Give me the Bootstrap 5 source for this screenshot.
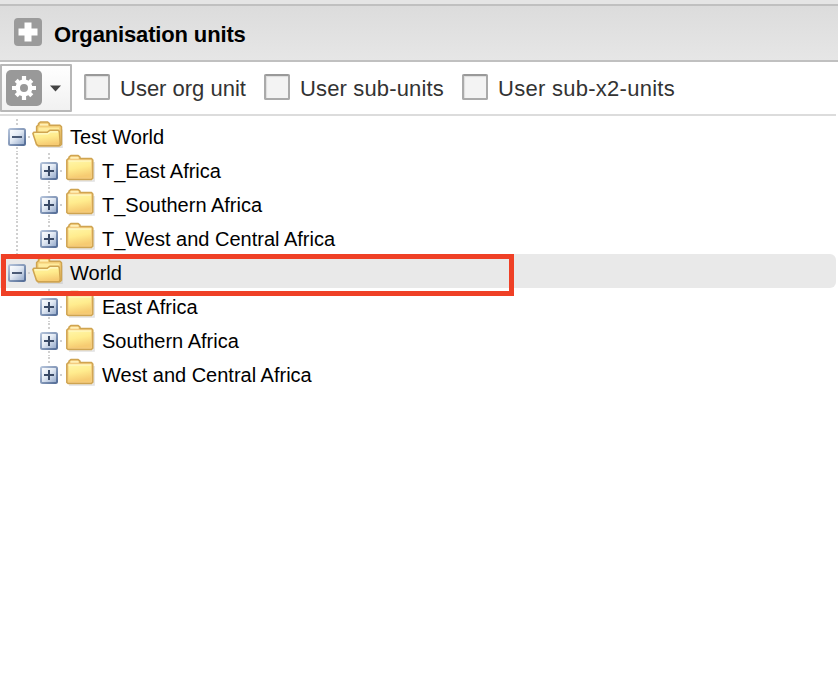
<!DOCTYPE html>
<html lang="en">
<head>
<meta charset="utf-8">
<meta name="viewport" content="width=device-width, initial-scale=1">
<title>Organisation units</title>
<link href="https://cdn.jsdelivr.net/npm/bootstrap@5.3.0/dist/css/bootstrap.min.css" rel="stylesheet">
<style>
body{font-family:"Liberation Sans",Arial,sans-serif;color:#000;background:#fff;height:682px;overflow:hidden}
.top-strip{height:4px;background:#e5e5e5}
.panel-head{height:58px;border-top:2px solid #c0c0c0;border-bottom:2px solid #c0c0c0;background:linear-gradient(#dcdcdc,#e6e6e6);padding-left:14px}
.panel-head h1{font-size:22px;line-height:26px;letter-spacing:-.15px;margin:3px 0 0 12px}
.panel-head svg{margin-bottom:2px}
.toolbar{height:54px;width:836px;border-bottom:2px solid #dcdcdc;color:#333;font-size:22px}
.gear-btn{width:72px;height:48px;margin-top:2px;border:2px solid #b8b8b8;border-radius:1px;background:linear-gradient(#fff,#f1f1f1);padding:0 0 0 4px}
.gear-btn .caret-down{margin-left:8px}
.check-group{width:180px}
.check-group.wide-label{width:198px}
.check-group.wide-label label{letter-spacing:.15px}
.check-group.widest-label{width:220px}
.check-group.widest-label label{letter-spacing:.27px}
.toolbar label{line-height:26px;margin-top:1px;white-space:nowrap}
.check-box{width:26px;height:26px;border:2px solid #aaa;border-top-color:#999;border-radius:2px;background:#f3f3f3;appearance:none;margin:-2px 10px 0 0;box-shadow:inset 1px 1px 1px #ddd}
.tree{padding-top:2px;width:836px}
.tree-row{height:34px;font-size:20px;line-height:24px}
.tree-row svg,.toolbar svg,.panel-head svg{flex:none;display:block}
.tree-row span{margin:4px 0 0 6px;white-space:nowrap}
.selected-row{background:#e9e9e9;border-radius:0 6px 6px 0}
.red-frame{left:1px;top:0;width:513px;height:42px;border:5px solid #ef4026;z-index:2}
</style>
</head>
<body>
<svg width="0" height="0" class="position-absolute">
<defs>
<linearGradient id="fold" x1="0" y1="0" x2=".25" y2="1"><stop offset="0" stop-color="#fff6a8"/><stop offset=".5" stop-color="#ffec8e"/><stop offset="1" stop-color="#f6cb72"/></linearGradient>
<linearGradient id="tog" x1="0" y1="0" x2="1" y2="1"><stop offset="0" stop-color="#fff"/><stop offset=".45" stop-color="#e3eaf4"/><stop offset="1" stop-color="#8fa5c8"/></linearGradient>
<linearGradient id="edge" x1="0" y1="0" x2="1" y2="1"><stop offset="0" stop-color="#b4c3da"/><stop offset="1" stop-color="#536c96"/></linearGradient>
<symbol id="minus" viewBox="0 0 32 34"><rect x="9" y="11" width="16" height="16" rx="1.5" fill="url(#tog)" stroke="url(#edge)" stroke-width="2"/><path d="M12 19h10" stroke="#4a5a76" stroke-width="2"/><path d="M28 19h2" stroke="#d0d0d0" stroke-width="2"/></symbol>
<symbol id="plus" viewBox="0 0 32 34"><rect x="9" y="11" width="16" height="16" rx="1.5" fill="url(#tog)" stroke="url(#edge)" stroke-width="2"/><path d="M12 19h10M17 14v10" stroke="#3a4a66" stroke-width="2"/><path d="M28 19h2" stroke="#d0d0d0" stroke-width="2"/></symbol>
<symbol id="up" viewBox="0 0 32 34"><path d="M17 1v8" stroke="#d0d0d0" stroke-width="2" stroke-dasharray="2 2"/></symbol>
<symbol id="down" viewBox="0 0 32 34"><path d="M17 29v5" stroke="#d0d0d0" stroke-width="2" stroke-dasharray="2 2"/></symbol>
<symbol id="line" viewBox="0 0 32 34"><path d="M17 1v33" stroke="#d0d0d0" stroke-width="2" stroke-dasharray="2 2"/></symbol>
<symbol id="closed" viewBox="0 0 32 34"><g transform="translate(0 -1)"><path d="M5 30h25V11" fill="none" stroke="#bbb" stroke-opacity=".45" stroke-width="1.6"/><path d="M2.8 27.5V9L5 7.2V6l1.8-1.4h7.4L16 6v1.6h11.5L28.8 9v18.3L27.3 28.6h-23z" fill="#f4cc80" stroke="#cfa450" stroke-width="1.5" stroke-linejoin="round"/><path d="M6.5 6.8h8" stroke="#fff0b7" stroke-width="1.8"/><path d="M4.5 9.5h22.6v17.3H4.5z" fill="url(#fold)"/><path d="M4.5 10h22.6" stroke="#fff8c8" stroke-width="1.2"/></g></symbol>
<symbol id="open" viewBox="0 0 32 34"><g transform="translate(0 -.5)"><path d="M6 29.8h24V12" fill="none" stroke="#bbb" stroke-opacity=".45" stroke-width="1.6"/><path d="M4.6 26V9L6.5 7.3V6L8.3 4.6h7.4L17.5 6v1.8H28l1.5 1.5v17.4L28 28.3H6z" fill="#f3ce78" stroke="#cfa450" stroke-width="1.5" stroke-linejoin="round"/><path d="M8 7.2h8" stroke="#fff0b7" stroke-width="1.7"/><path d="M6.5 10h20.7v7H6.5z" fill="#ffec9e"/><path d="M.9 16l.9-1.2h13.4l2.6-2h8.5l1 1.2.9 11.8-1 2.5H6.5L4.5 27z" fill="url(#fold)" stroke="#cfa450" stroke-width="1.5" stroke-linejoin="round"/><path d="M3 16.3h12.8l2.6-2H26" fill="none" stroke="#fff9c8" stroke-width="1.2"/></g></symbol>
</defs>
</svg>
<div class="top-strip"></div>
<header class="panel-head d-flex align-items-center">
<svg width="28" height="28" viewBox="0 0 28 28"><rect width="28" height="28" rx="4" fill="#9b9b9b"/><path d="M10.5 4.5h7v6h6v7h-6v6h-7v-6h-6v-7h6z" fill="#fff"/></svg>
<h1 class="fw-bold">Organisation units</h1>
</header>
<div class="toolbar d-flex align-items-start">
<button class="gear-btn d-flex align-items-center" type="button" aria-label="Settings">
<svg width="36" height="36" viewBox="0 0 36 36"><rect width="36" height="36" rx="5" fill="#999"/><g transform="translate(18 18)"><circle r="6.2" fill="none" stroke="#fff" stroke-width="4.4"/><path d="M0-12v5M0 7v5M-12 0h5M7 0h5M-7.8-7.8l3 3M7.8-7.8l-3 3M-7.8 7.8l3-3M7.8 7.8l-3-3" stroke="#fff" stroke-width="4.2"/></g></svg>
<svg class="caret-down" width="11" height="7" viewBox="0 0 11 7"><path d="M0 .5h11L5.5 6.5z" fill="#444"/></svg>
</button>
<div class="d-flex align-self-center ms-2 ps-1">
<div class="check-group d-flex align-items-center"><input class="check-box" type="checkbox" id="own-unit"><label for="own-unit">User org unit</label></div>
<div class="check-group wide-label d-flex align-items-center"><input class="check-box" type="checkbox" id="sub-units"><label for="sub-units">User sub-units</label></div>
<div class="check-group widest-label d-flex align-items-center"><input class="check-box" type="checkbox" id="sub-x2"><label for="sub-x2">User sub-x2-units</label></div>
</div>
</div>
<main class="tree">
<div class="tree-row d-flex"><svg width="32" height="34"><use href="#up"/><use href="#down"/><use href="#minus"/></svg><svg width="32" height="34"><use href="#open"/></svg><span class="align-self-center">Test World</span></div>
<div class="tree-row d-flex"><svg width="32" height="34"><use href="#line"/></svg><svg width="32" height="34"><use href="#up"/><use href="#down"/><use href="#plus"/></svg><svg width="32" height="34"><use href="#closed"/></svg><span class="align-self-center">T_East Africa</span></div>
<div class="tree-row d-flex"><svg width="32" height="34"><use href="#line"/></svg><svg width="32" height="34"><use href="#up"/><use href="#down"/><use href="#plus"/></svg><svg width="32" height="34"><use href="#closed"/></svg><span class="align-self-center">T_Southern Africa</span></div>
<div class="tree-row d-flex"><svg width="32" height="34"><use href="#line"/></svg><svg width="32" height="34"><use href="#up"/><use href="#plus"/></svg><svg width="32" height="34"><use href="#closed"/></svg><span class="align-self-center">T_West and Central Africa</span></div>
<div class="tree-row selected-row d-flex position-relative"><svg width="32" height="34"><use href="#minus"/></svg><svg width="32" height="34"><use href="#open"/></svg><span class="align-self-center">World</span><div class="red-frame position-absolute"></div></div>
<div class="tree-row d-flex"><svg width="32" height="34"></svg><svg width="32" height="34"><use href="#up"/><use href="#down"/><use href="#plus"/></svg><svg width="32" height="34"><use href="#closed"/></svg><span class="align-self-center">East Africa</span></div>
<div class="tree-row d-flex"><svg width="32" height="34"></svg><svg width="32" height="34"><use href="#up"/><use href="#down"/><use href="#plus"/></svg><svg width="32" height="34"><use href="#closed"/></svg><span class="align-self-center">Southern Africa</span></div>
<div class="tree-row d-flex"><svg width="32" height="34"></svg><svg width="32" height="34"><use href="#up"/><use href="#plus"/></svg><svg width="32" height="34"><use href="#closed"/></svg><span class="align-self-center">West and Central Africa</span></div>
</main>
<script src="https://cdn.jsdelivr.net/npm/bootstrap@5.3.0/dist/js/bootstrap.bundle.min.js"></script>
</body>
</html>
